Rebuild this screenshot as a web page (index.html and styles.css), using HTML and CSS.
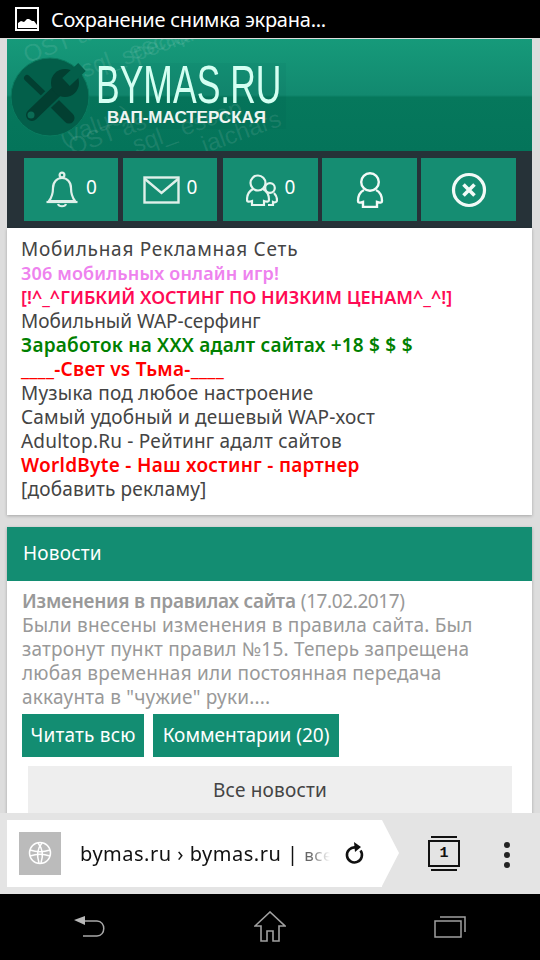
FILE: index.html
```html
<!DOCTYPE html>
<html lang="ru">

<head>
    <meta charset="UTF-8">
    <meta name="viewport" content="width=device-width, initial-scale=1.0">
    <title>BYMAS.RU</title>
    <link rel="stylesheet" href="styles.css">
</head>

<body>
    <div class="phone">
        <!-- status bar -->
        <div class="status-bar">
            <svg class="status-icon" width="24" height="24" viewBox="0 0 24 24">
                <rect x="1" y="1" width="22" height="22" fill="none" stroke="#fff" stroke-width="2" />
                <path d="M3 21v-5l3-2 3 1 3-3 2 0 3 2 2 0 3 4v3z" fill="#fff" />
            </svg>
            <span>Сохранение снимка экрана...</span>
        </div>

        <div class="page">
            <div class="header">
                <div class="banner">
                    <div class="watermark">
                        <span class="wm wm1">OST as</span>
                        <span class="wm wm2">rsql_ escap</span>
                        <span class="wm wm3">specialchars</span>
                        <span class="wm wm4">(value)</span>
                        <span class="wm wm5">OST as</span>
                        <span class="wm wm6">sql_ escap</span>
                        <span class="wm wm7">ialchars</span>
                    </div>
                    <svg class="logo-icon" width="80" height="80" viewBox="0 0 80 80" fill="none" stroke-linecap="round">
                        <circle cx="40" cy="40" r="39" fill="#035f4a" stroke="#0a7c60" />
                        <path d="M17 21L41 44" stroke="#023f31" stroke-width="6" />
                        <path d="M42 44L59 61" stroke="#023f31" stroke-width="11" />
                        <path d="M22 58L49 32" stroke="#035f4a" stroke-width="16" stroke-linecap="butt" />
                        <path d="M22 58L49 32" stroke="#023f31" stroke-width="12" />
                        <circle cx="55" cy="26" r="14" fill="#023f31" />
                        <path d="M56 25L72 10" stroke="#035f4a" stroke-width="11" stroke-linecap="butt" />
                        <circle cx="21" cy="58" r="3.500" fill="#0a6b54" />
                    </svg>
                    <div class="logo-text">
                        <div class="logo-name">BYMAS.RU</div>
                        <div class="logo-sub">ВАП-МАСТЕРСКАЯ</div>
                    </div>
                </div>
                <div class="toolbar">
                    <a class="tool tool-a">
                        <svg width="34" height="38" viewBox="0 0 34 38" fill="none" stroke="#dff0ea" stroke-width="2.200">
                            <circle cx="17" cy="4" r="2.400" />
                            <path d="M4 30c3-4 4-7 4-13 0-6 4-10 9-10s9 4 9 10c0 6 1 9 4 13z" stroke-linejoin="round" />
                            <path d="M1.500 31h31" />
                            <path d="M13 33c1 3 7 3 8 0" />
                        </svg>
                        <span>0</span>
                    </a>
                    <a class="tool tool-b">
                        <svg width="37" height="28" viewBox="0 0 37 28" fill="none" stroke="#dff0ea" stroke-width="2.400">
                            <rect x="1.500" y="1.500" width="34" height="25" />
                            <path d="M2 3l16.500 14L35 3" />
                        </svg>
                        <span>0</span>
                    </a>
                    <a class="tool tool-c">
                        <svg width="32" height="32" viewBox="0 0 32 32" fill="none" stroke="#e6f5ef" stroke-width="2.200">
                            <circle cx="12" cy="9" r="7.500" />
                            <path d="M7 15C3 17 1 21 1 26c0 2 2 2 5 1v4h12v-4c3 1 5 1 5-1 0-5-2-9-6-11" />
                            <circle cx="24" cy="14" r="4.800" />
                            <path d="M22 31h5v-3c2 1 4 0 4-2 0-3-1-5-3-7" />
                        </svg>
                        <span>0</span>
                    </a>
                    <a class="tool tool-d">
                        <svg width="28" height="36" viewBox="0 0 28 36" fill="none" stroke="#f2faf7" stroke-width="2.400">
                            <circle cx="14" cy="10" r="8.800" />
                            <path d="M8 18C4 20 2 24 2 29c0 2 2 2 5 1v5h14v-5c3 1 5 1 5-1 0-5-2-9-6-11" />
                        </svg>
                    </a>
                    <a class="tool tool-e">
                        <svg width="36" height="36" viewBox="0 0 36 36" fill="none" stroke="#f2faf7" stroke-width="3.200">
                            <circle cx="18" cy="18" r="15.500" />
                            <path d="M12.500 12.500l11 11M23.500 12.500l-11 11" stroke-width="3.600" />
                        </svg>
                    </a>
                </div>
            </div>

            <div class="card ads">
                <a class="ad ad-first">Мобильная Рекламная Сеть</a>
                <a class="ad ad-violet">306 мобильных онлайн игр!</a>
                <a class="ad ad-pink">[!^_^ГИБКИЙ ХОСТИНГ ПО НИЗКИМ ЦЕНАМ^_^!]</a>
                <a class="ad ad-tight">Мобильный WAP-серфинг</a>
                <a class="ad ad-green">Заработок на ХХХ адалт сайтах +18 $ $ $</a>
                <a class="ad ad-red">____-Свет vs Тьма-____</a>
                <a class="ad">Музыка под любое настроение</a>
                <a class="ad">Самый удобный и дешевый WAP-хост</a>
                <a class="ad">Adultop.Ru - Рейтинг адалт сайтов</a>
                <a class="ad ad-red">WorldByte - Наш хостинг - партнер</a>
                <a class="ad">[добавить рекламу]</a>
            </div>

            <div class="card news">
                <div class="news-title">Новости</div>
                <div class="news-body">
                    <p class="news-text"><b>Изменения в правилах сайта</b> <span class="news-date">(17.02.2017)</span><br>
                        Были внесены изменения в правила сайта. Был<br>
                        затронут пункт правил №15. Теперь запрещена<br>
                        любая временная или постоянная передача<br>
                        аккаунта в "чужие" руки....</p>
                    <div class="news-buttons">
                        <a class="btn btn-read">Читать всю</a>
                        <a class="btn btn-comments">Комментарии (20)</a>
                    </div>
                    <a class="all-news">Все новости</a>
                </div>
            </div>
        </div>

        <!-- browser address bar -->
        <div class="address-bar">
            <div class="url-box">
                <div class="favicon">
                    <svg width="24" height="24" viewBox="0 0 24 24" fill="none" stroke="#fff" stroke-width="1.500">
                        <circle cx="12" cy="12" r="10.500" />
                        <path d="M2 9c6 2 14 2 20 0M2 15c6-2 14-2 20 0" />
                        <path d="M14 2c-5 6-5 14-3 20M10 2c5 6 5 14 3 20" />
                    </svg>
                </div>
                <div class="url-text">bymas.ru › bymas.ru | <span class="url-rest">все новости</span></div>
                <svg class="reload" width="22" height="24" viewBox="0 0 22 24" fill="none">
                    <path d="M16.500 9.500a7.500 7.500 0 1 1-5-3" stroke="#111" stroke-width="2.600" />
                    <path d="M10 1l7 5-6 5z" fill="#111" />
                </svg>
            </div>
            <div class="tab-count">
                <div class="tab-line"></div>
                <div class="tab-box">1</div>
                <div class="tab-line"></div>
            </div>
            <div class="menu-dots">
                <i></i><i></i><i></i>
            </div>
        </div>

        <!-- android buttons -->
        <div class="nav-bar">
            <svg width="32" height="24" viewBox="0 0 32 24" fill="none">
                <path d="M8 6h15c9 0 9 15 0 15H9" stroke="#a8a8a8" stroke-width="1.500" />
                <path d="M0 5l11-4v9z" fill="#b8b8b8" />
            </svg>
            <svg width="32" height="32" viewBox="0 0 32 32" fill="none" stroke="#a0a0a0" stroke-width="1.600">
                <path d="M1 15L16 1l15 14h-6v15h-6V20h-6v10H7V15z" />
            </svg>
            <svg width="32" height="24" viewBox="0 0 32 24" fill="none" stroke="#a0a0a0" stroke-width="1.500">
                <rect x="1" y="6" width="26" height="16" />
                <path d="M6 2h25v15" />
            </svg>
        </div>
    </div>
</body>

</html>
```

FILE: styles.css
```css
html, body {
    margin: 0;
    padding: 0;
}

body {
    font-family: "Noto Sans", "Open Sans", sans-serif;
    font-size: 19px;
    letter-spacing: 0.2px;
    background-color: #ddd;
}

a {
    text-decoration: none;
    color: inherit;
}

.phone {
    width: 540px;
    height: 960px;
    display: flex;
    flex-direction: column;
    overflow: hidden;
}

.status-bar {
    height: 38px;
    flex: none;
    background-color: #000;
    color: #fff;
    display: flex;
    align-items: center;
    gap: 12px;
    padding-left: 15px;
    font-size: 20px;
    letter-spacing: -0.25px;
    white-space: nowrap;
}

.status-icon {
    flex: none;
}

.page {
    flex: 1;
    min-height: 0;
    overflow: hidden;
    padding: 1px 8px 0 7px;
    background-color: #ddd;
}

.header {
    background-color: #263238;
}

.banner {
    position: relative;
    height: 112px;
    overflow: hidden;
    display: flex;
    align-items: center;
    gap: 0;
    padding-left: 3px;
    background: linear-gradient(#169a7a 0%, #12896f 50%, #06785c 52%, #04745a 100%);
}

.watermark {
    position: absolute;
    top: 0;
    left: 0;
    right: 0;
    bottom: 0;
    color: rgba(255, 255, 255, 0.1);
    font-family: "Liberation Sans", sans-serif;
    font-size: 24px;
    letter-spacing: 0;
    white-space: nowrap;
}

.wm {
    position: absolute;
    transform: rotate(-20deg);
    transform-origin: 0 100%;
}

.wm1 { left: 22px; top: 2px; }
.wm2 { left: 72px; top: 19px; }
.wm3 { left: 120px; top: 4px; }
.wm4 { left: 58px; top: 84px; }
.wm5 { left: 67px; top: 94px; }
.wm6 { left: 131px; top: 92px; }
.wm7 { left: 200px; top: 92px; }

.logo-icon {
    position: relative;
    flex: none;
    margin-top: 4px;
}

.logo-text {
    position: relative;
    margin-top: 2px;
    padding: 0 6px;
    background-color: rgba(0, 60, 50, 0.05);
    width: 196px;
    box-sizing: border-box;
}

.logo-name {
    font-family: "Liberation Sans", sans-serif;
    font-size: 53px;
    line-height: 44px;
    letter-spacing: 0;
    color: #d4fff2;
    white-space: nowrap;
    transform: scaleX(0.67);
    transform-origin: 0 50%;
}

.logo-sub {
    font-family: "Liberation Sans", sans-serif;
    font-weight: bold;
    font-size: 17px;
    line-height: 22px;
    letter-spacing: 0;
    padding-left: 11px;
    color: #eef5f2;
    white-space: nowrap;
}

.toolbar {
    display: flex;
    height: 63px;
    padding: 7px 0;
    margin-left: 17px;
}

.tool {
    background-color: #158d72;
    color: #fff;
    display: flex;
    align-items: center;
    justify-content: center;
    gap: 7px;
    font-size: 19px;
    letter-spacing: 0;
    width: 94px;
    height: 63px;
    flex: none;
    margin-right: 5px;
}

.tool-c {
    margin-left: 1px;
    width: 95px;
    margin-right: 4px;
}

.tool-d {
    width: 95px;
    margin-right: 4px;
}

.tool-e {
    width: 95px;
    margin-right: 0;
}

.tool span {
    margin-top: -6px;
}

.card {
    background-color: #fff;
    box-shadow: 0 1px 3px rgba(0, 0, 0, 0.25);
}

.ads {
    margin-top: 0;
    padding: 9px 14px 14px;
    margin-bottom: 12px;
}

.ad {
    display: block;
    height: 24px;
    line-height: 24px;
    color: #444;
    white-space: nowrap;
}

.ad-first {
    letter-spacing: 0.75px;
}

.ad-tight {
    letter-spacing: 0;
}

.ad-violet {
    color: #ee82ee;
    font-size: 18px;
    font-weight: 600;
    letter-spacing: 0.15px;
}

.ad-pink {
    color: #ff0a54;
    font-size: 18px;
    font-weight: 600;
    letter-spacing: 0;
}

.ad-green {
    color: #008000;
    font-weight: 600;
    letter-spacing: 0.23px;
}

.ad-red {
    color: #ff0000;
    font-weight: 600;
    letter-spacing: 0.27px;
}

.news-title {
    height: 54px;
    line-height: 52px;
    background-color: #138d72;
    color: #fff;
    padding-left: 16px;
}

.news-body {
    padding: 8px 20px 0 15px;
}

.news-text {
    margin: 0;
    line-height: 24px;
    color: #999;
    white-space: nowrap;
}

.news-text b {
    font-weight: 600;
    letter-spacing: -0.25px;
}

.news-date {
    letter-spacing: -0.4px;
}

.news-buttons {
    display: flex;
    gap: 9px;
    margin-top: 5px;
}

.btn {
    height: 43px;
    line-height: 43px;
    background-color: #138d72;
    color: #fff;
    text-align: center;
    white-space: nowrap;
}

.btn-read {
    width: 122px;
}

.btn-comments {
    width: 186px;
    letter-spacing: 0;
}

.all-news {
    display: block;
    margin: 9px 0 0 6px;
    height: 49px;
    line-height: 49px;
    background-color: #eee;
    color: #444;
    text-align: center;
}

.address-bar {
    height: 81px;
    flex: none;
    position: relative;
    display: flex;
    align-items: center;
    background-color: #e4e4e4;
    padding-left: 7px;
}

.url-box {
    width: 375px;
    height: 67px;
    margin-top: -1px;
    background-color: #fff;
    display: flex;
    align-items: center;
    position: relative;
    padding-left: 12px;
    box-sizing: border-box;
}

.url-box::after {
    content: "";
    position: absolute;
    left: 100%;
    top: 0;
    border-left: 17px solid #fff;
    border-top: 33.500px solid transparent;
    border-bottom: 33.500px solid transparent;
}

.favicon {
    width: 42px;
    height: 43px;
    flex: none;
    background-color: #bbb;
    display: flex;
    align-items: center;
    justify-content: center;
}

.url-text {
    margin-left: 19px;
    width: 250px;
    flex: none;
    overflow: hidden;
    white-space: nowrap;
    color: #111;
    font-size: 20px;
    letter-spacing: 0.5px;
    -webkit-mask-image: linear-gradient(to right, #000 92%, transparent 100%);
    mask-image: linear-gradient(to right, #000 92%, transparent 100%);
}

.url-rest {
    color: #666;
    font-size: 17px;
}

.reload {
    flex: none;
    margin-left: 14px;
}

.tab-count {
    margin-left: 46px;
    width: 32px;
    display: flex;
    flex-direction: column;
    align-items: center;
    gap: 2px;
    margin-top: -1px;
}

.tab-line {
    width: 26px;
    height: 2px;
    background-color: #111;
}

.tab-box {
    width: 28px;
    height: 23px;
    border: 2px solid #111;
    text-align: center;
    font-family: "Liberation Mono", monospace;
    font-weight: bold;
    font-size: 15px;
    letter-spacing: 0;
    line-height: 23px;
    color: #111;
}

.menu-dots {
    margin-left: 44px;
    display: flex;
    flex-direction: column;
    gap: 4px;
    margin-top: 2px;
}

.menu-dots i {
    display: block;
    width: 6px;
    height: 6px;
    border-radius: 50%;
    background-color: #222;
}

.nav-bar {
    height: 66px;
    flex: none;
    background-color: #000;
    display: flex;
    align-items: center;
    justify-content: space-between;
    padding: 0 74px;
}
```
